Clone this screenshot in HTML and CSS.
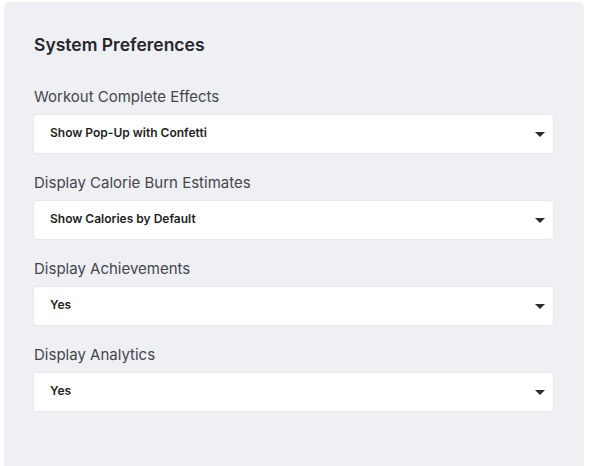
FILE: index.html
```html
<!DOCTYPE html>
<html>
<head>
<meta charset="utf-8">
<link rel="stylesheet" href="styles.css">
</head>
<body>
<div class="panel">
  <h2 class="title">System Preferences</h2>
  <div class="field">
    <div class="label">Workout Complete Effects</div>
    <div class="select"><span class="value">Show Pop-Up with Confetti</span><i class="caret"></i></div>
  </div>
  <div class="field">
    <div class="label">Display Calorie Burn Estimates</div>
    <div class="select"><span class="value">Show Calories by Default</span><i class="caret"></i></div>
  </div>
  <div class="field">
    <div class="label">Display Achievements</div>
    <div class="select"><span class="value">Yes</span><i class="caret"></i></div>
  </div>
  <div class="field">
    <div class="label">Display Analytics</div>
    <div class="select"><span class="value">Yes</span><i class="caret"></i></div>
  </div>
</div>
</body>
</html>
```
FILE: styles.css
```css
html, body { margin: 0; padding: 0; background: #fff; }
body { font-family: Inter, "Noto Sans", sans-serif; color: #2a2b33; }
.panel {
  margin: 2px 5px 0 4px;
  height: 470px;
  background: #eff0f4;
  border-radius: 5px 5px 0 0;
  padding: 33px 31px 0 30px;
  box-sizing: border-box;
}
.title {
  margin: 0 0 33px;
  font-size: 17.5px;
  font-weight: 600;
  line-height: 20px;
  color: #25262d;
}
.field { margin-bottom: 21px; }
.label {
  font-size: 15px;
  line-height: 18px;
  color: #45464d;
  margin-bottom: 9px;
}
.select {
  height: 38px;
  background: #fff;
  border-radius: 3px;
  box-shadow: 0 0 0 1px #e9eaee;
  display: flex;
  align-items: center;
  justify-content: space-between;
  padding: 0 8px 0 16px;
  box-sizing: border-box;
  font-size: 12px;
  font-weight: 600;
  color: #1e1f25;
}
.value { padding-bottom: 4px; }
.caret {
  width: 0; height: 0;
  border-left: 5.5px solid transparent;
  border-right: 5.5px solid transparent;
  border-top: 5px solid #2a2b33;
  margin-top: 1px;
}
```
